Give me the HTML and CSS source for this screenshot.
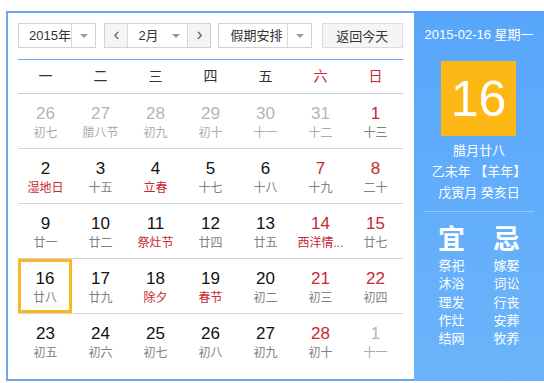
FILE: index.html
```html
<!DOCTYPE html>
<html lang="zh-CN">
<head>
    <meta charset="UTF-8">
    <title>万年历</title>
    <link rel="stylesheet" href="styles.css">
</head>
<body>
    <div class="calendar">
        <div class="main">
            <div class="toolbar">
                <div class="select year">
                    <span class="select-text">2015年</span>
                    <span class="select-arrow"></span>
                </div>
                <div class="month-group">
                    <span class="nav-btn">&lsaquo;</span>
                    <div class="select month">
                        <span class="select-text">2月</span>
                        <span class="select-arrow plain"></span>
                    </div>
                    <span class="nav-btn">&rsaquo;</span>
                </div>
                <div class="select holiday">
                    <span class="select-text">假期安排</span>
                    <span class="select-arrow"></span>
                </div>
                <button class="today-btn">返回今天</button>
            </div>

            <div class="week-head">
                <span>一</span><span>二</span><span>三</span><span>四</span><span>五</span>
                <span class="weekend">六</span><span class="weekend">日</span>
            </div>

            <div class="days">
                <div class="day other"><b>26</b><i>初七</i></div>
                <div class="day other"><b>27</b><i>腊八节</i></div>
                <div class="day other"><b>28</b><i>初九</i></div>
                <div class="day other"><b>29</b><i>初十</i></div>
                <div class="day other"><b>30</b><i>十一</i></div>
                <div class="day other"><b>31</b><i>十二</i></div>
                <div class="day weekend"><b>1</b><i>十三</i></div>

                <div class="day"><b>2</b><i class="fest">湿地日</i></div>
                <div class="day"><b>3</b><i>十五</i></div>
                <div class="day"><b>4</b><i class="fest">立春</i></div>
                <div class="day"><b>5</b><i>十七</i></div>
                <div class="day"><b>6</b><i>十八</i></div>
                <div class="day weekend"><b>7</b><i>十九</i></div>
                <div class="day weekend"><b>8</b><i>二十</i></div>

                <div class="day"><b>9</b><i>廿一</i></div>
                <div class="day"><b>10</b><i>廿二</i></div>
                <div class="day"><b>11</b><i class="fest">祭灶节</i></div>
                <div class="day"><b>12</b><i>廿四</i></div>
                <div class="day"><b>13</b><i>廿五</i></div>
                <div class="day weekend"><b>14</b><i class="fest">西洋情...</i></div>
                <div class="day weekend"><b>15</b><i>廿七</i></div>

                <div class="day selected"><b>16</b><i>廿八</i></div>
                <div class="day"><b>17</b><i>廿九</i></div>
                <div class="day"><b>18</b><i class="fest">除夕</i></div>
                <div class="day"><b>19</b><i class="fest">春节</i></div>
                <div class="day"><b>20</b><i>初二</i></div>
                <div class="day weekend"><b>21</b><i>初三</i></div>
                <div class="day weekend"><b>22</b><i>初四</i></div>

                <div class="day last"><b>23</b><i>初五</i></div>
                <div class="day last"><b>24</b><i>初六</i></div>
                <div class="day last"><b>25</b><i>初七</i></div>
                <div class="day last"><b>26</b><i>初八</i></div>
                <div class="day last"><b>27</b><i>初九</i></div>
                <div class="day last weekend"><b>28</b><i>初十</i></div>
                <div class="day last other"><b>1</b><i>十一</i></div>
            </div>
        </div>

        <div class="side">
            <div class="side-date">2015-02-16 星期一</div>
            <div class="side-day">16</div>
            <div class="side-lunar">
                <div>腊月廿八</div>
                <div>乙未年 【羊年】</div>
                <div>戊寅月 癸亥日</div>
            </div>
            <div class="side-line"></div>
            <div class="side-yiji">
                <div class="yiji-col">
                    <div class="yiji-title">宜</div>
                    <div>祭祀</div>
                    <div>沐浴</div>
                    <div>理发</div>
                    <div>作灶</div>
                    <div>结网</div>
                </div>
                <div class="yiji-col">
                    <div class="yiji-title">忌</div>
                    <div>嫁娶</div>
                    <div>词讼</div>
                    <div>行丧</div>
                    <div>安葬</div>
                    <div>牧养</div>
                </div>
            </div>
        </div>
    </div>
</body>
</html>
```

FILE: styles.css
```css
body {
    margin: 0;
    overflow: hidden;
    background: #fff;
    font-family: "Liberation Sans", "Noto Sans CJK SC", sans-serif;
    color: #333;
}

.calendar {
    display: flex;
    width: 538px;
    height: 366px;
    margin: 11px 0 0 6px;
    border: 2px solid #6ea8e8;
}

/* 左侧日历 */
.main {
    width: 385px;
    padding: 10px 11px 0 10px;
}

.toolbar {
    display: flex;
    height: 25px;
    margin-bottom: 11px;
}

.select {
    display: flex;
    height: 23px;
    border: 1px solid #d2d2d2;
    background: #fff;
    font-size: 13px;
    line-height: 23px;
}

.select-text {
    flex: 1;
    padding-left: 10px;
}

.select-arrow {
    position: relative;
    width: 23px;
    border-left: 1px solid #d9d9d9;
}

.select-arrow.plain {
    border-left: none;
}

.select-arrow::after {
    content: '';
    position: absolute;
    left: 8px;
    top: 10px;
    border-left: 4px solid transparent;
    border-right: 4px solid transparent;
    border-top: 4px solid #999;
}

.year {
    width: 77px;
}

.month-group {
    display: flex;
    margin-left: 8px;
    border: 1px solid #d2d2d2;
    height: 23px;
}

.month-group .select {
    width: 59px;
    height: 23px;
    border-top: none;
    border-bottom: none;
    border-color: #d9d9d9;
}

.month-group .select-text {
    padding-left: 10px;
}

.nav-btn {
    width: 22px;
    text-align: center;
    background: #f4f4f4;
    color: #666;
    font-size: 18px;
    line-height: 21px;
}

.holiday {
    width: 92px;
    margin-left: 7px;
}

.holiday .select-text {
    padding-left: 11px;
}

.today-btn {
    width: 82px;
    height: 25px;
    margin-left: 10px;
    border: 1px solid #dcdcdc;
    background: #f5f5f5;
    color: #333;
    font-family: inherit;
    font-size: 13px;
    padding: 0;
}

.week-head {
    display: grid;
    grid-template-columns: repeat(7, 55px);
    height: 33px;
    border-top: 1px solid #6ea8e8;
    border-bottom: 1px solid #ccc;
    font-size: 14px;
    line-height: 32px;
    text-align: center;
}

.week-head .weekend {
    color: #c8282e;
}

.days {
    display: grid;
    grid-template-columns: repeat(7, 55px);
    grid-auto-rows: 55px;
}

.day {
    display: flex;
    flex-direction: column;
    align-items: center;
    border-bottom: 1px solid #d4d4d4;
    padding-top: 9px;
    box-sizing: border-box;
}

.day.last {
    border-bottom: none;
}

.day b {
    font-weight: normal;
    font-size: 17px;
    line-height: 21px;
    color: #111;
}

.day i {
    font-style: normal;
    font-size: 12px;
    line-height: 19px;
    color: #808080;
}

.day.weekend b {
    color: #c8282e;
}

.day .fest {
    color: #c8282e;
}

.day.other b {
    color: #b5b5b5;
}

.day.other i {
    color: #ababab;
}

.day.selected {
    box-shadow: inset 0 0 0 3px #f9b81e;
    margin-right: 1px;
}

/* 右侧详情 */
.side {
    flex: 1;
    background: linear-gradient(#58a6fb, #6cb4fb);
    color: #fff;
    text-align: center;
    margin-top: -2px;
    margin-bottom: -2px;
    padding-top: 14px;
}

.side-date {
    width: 130px;
    font-size: 13px;
    line-height: 20px;
}

.side-day {
    width: 75px;
    height: 75px;
    margin: 16px 0 0 27px;
    background: #fdb815;
    font-size: 50px;
    line-height: 76px;
}

.side-lunar {
    width: 130px;
    margin-top: 4px;
    font-size: 13px;
    line-height: 21px;
}

.side-line {
    width: 110px;
    height: 1px;
    margin: 8px 0 0 10px;
    background: #95c8fb;
}

.side-yiji {
    display: flex;
    padding: 0 10px;
    margin-top: 13px;
    font-size: 13px;
    line-height: 18.3px;
}

.yiji-col {
    width: 55px;
}

.yiji-title {
    font-size: 27px;
    font-weight: bold;
    line-height: 30px;
    margin-bottom: 2px;
}
```
